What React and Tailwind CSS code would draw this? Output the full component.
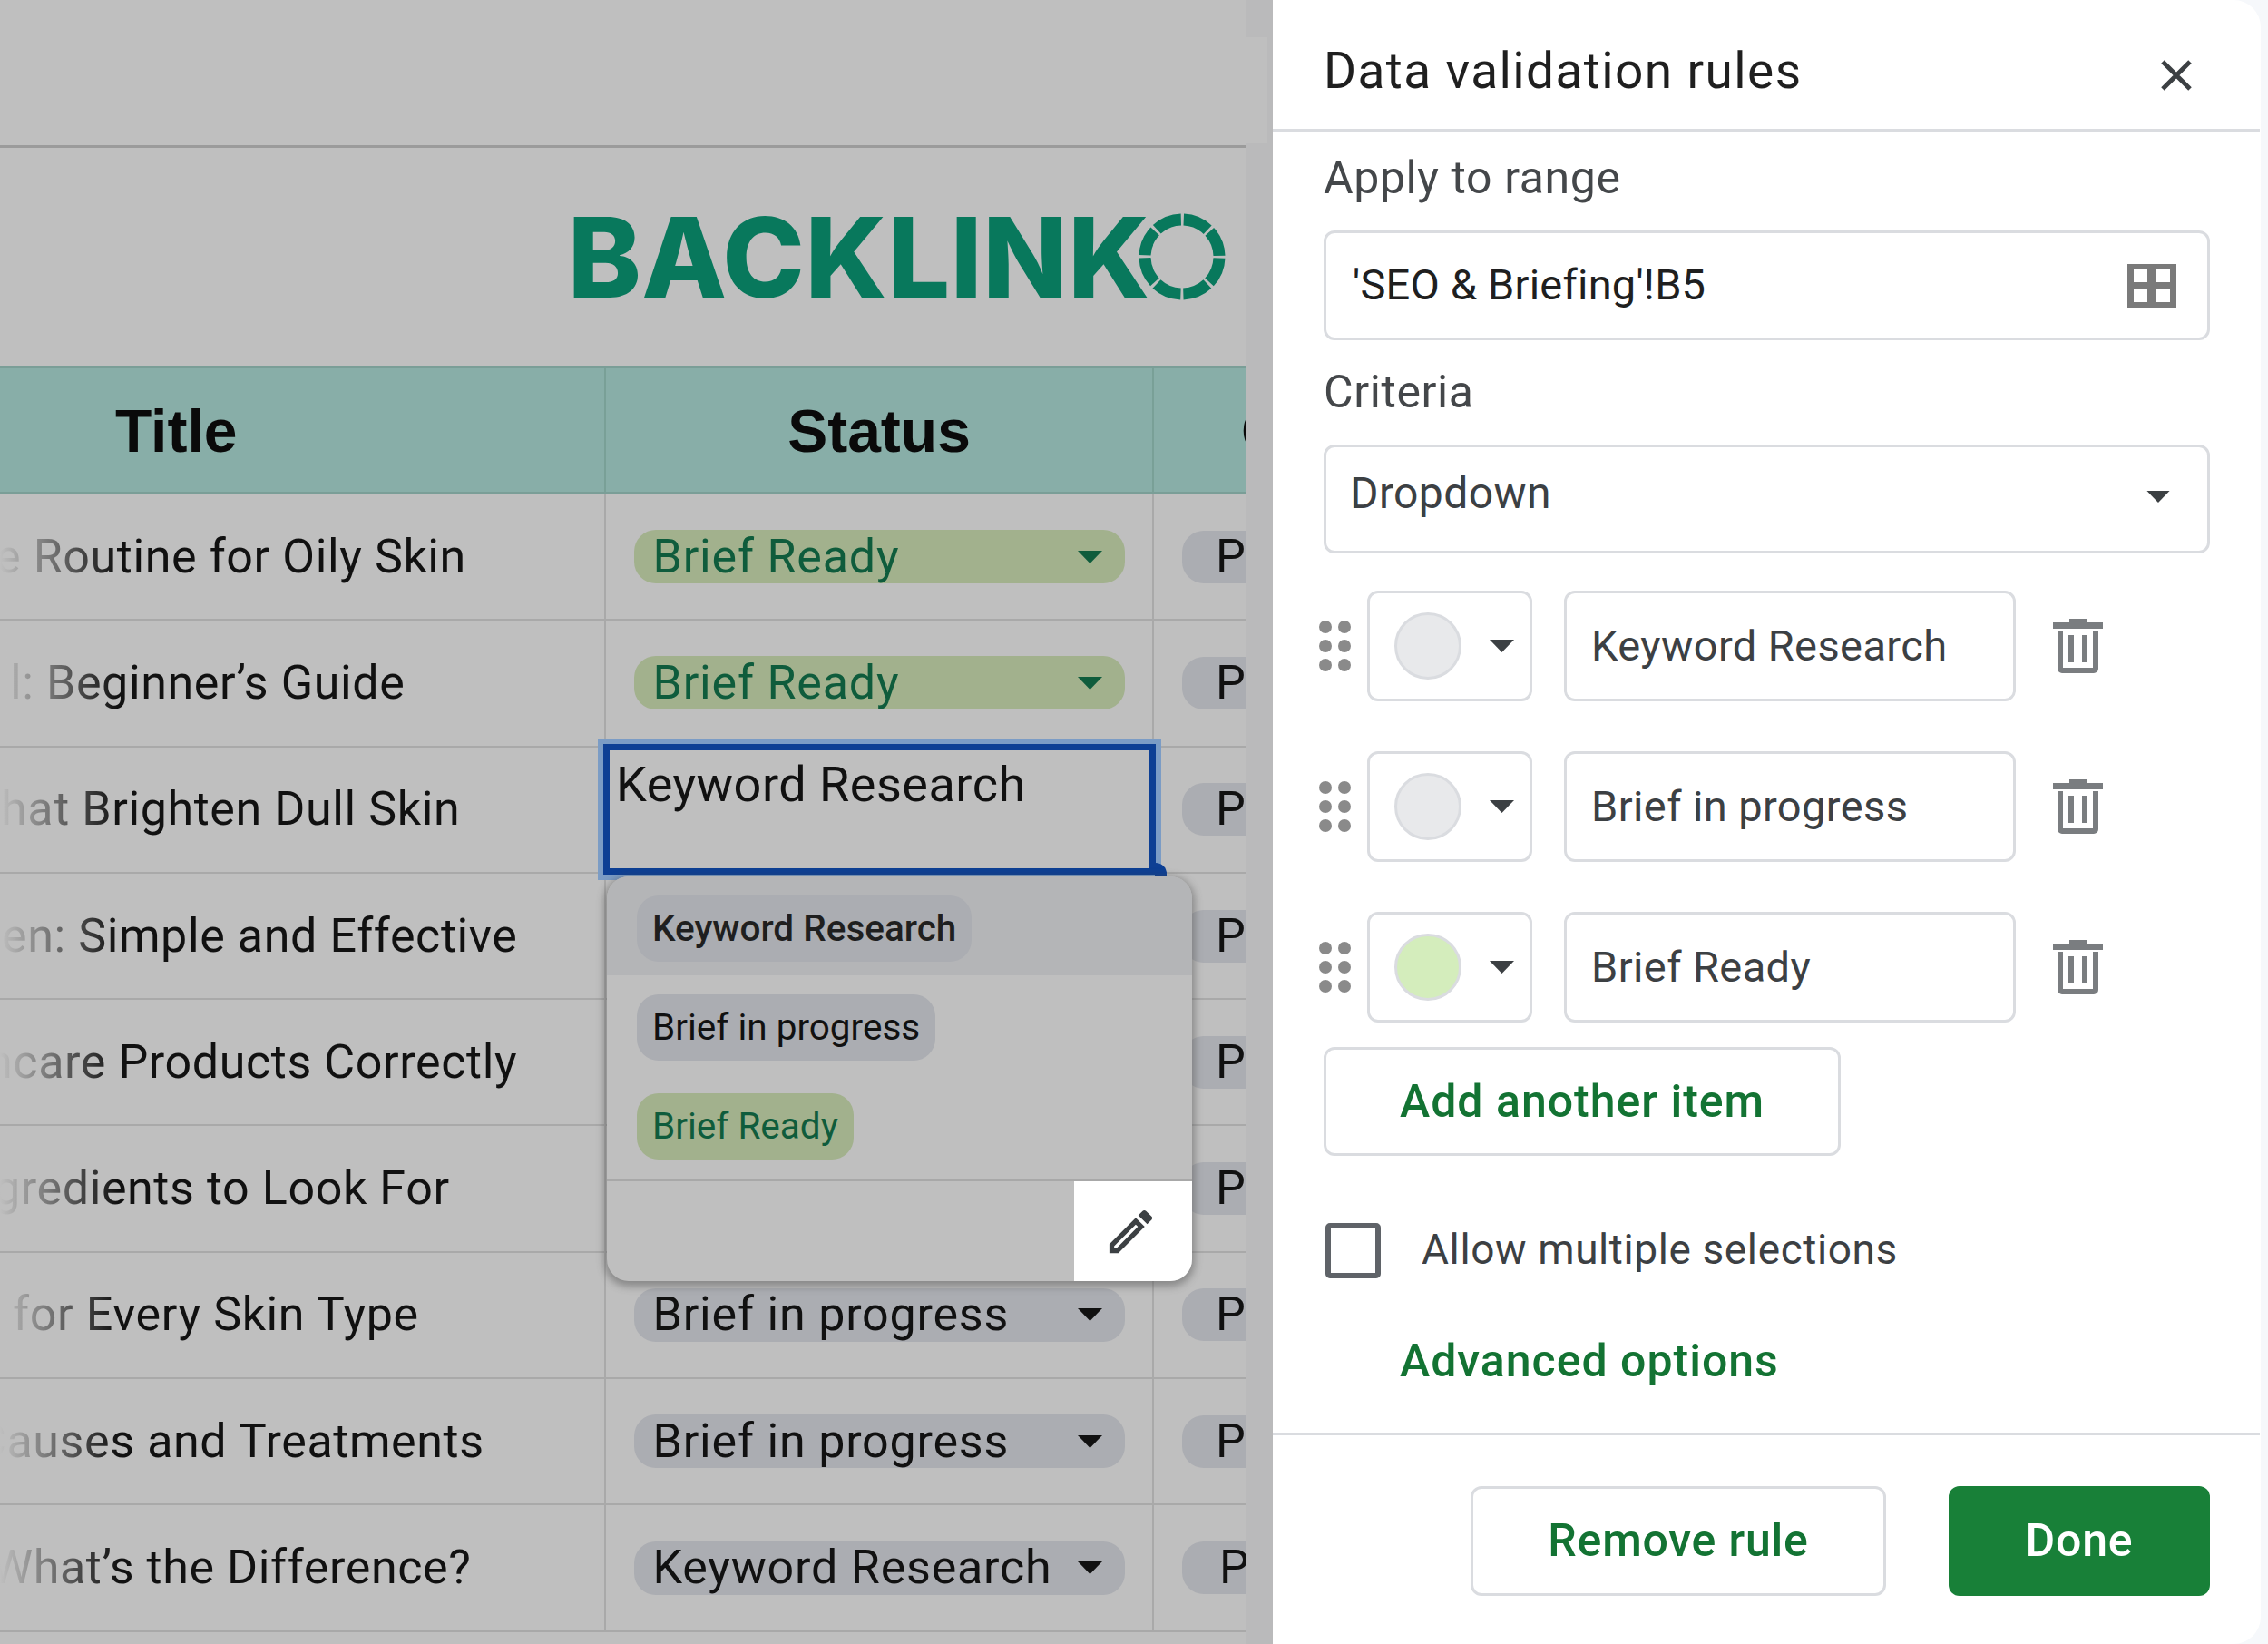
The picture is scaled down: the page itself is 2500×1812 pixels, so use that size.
import React from 'react'

const rows = [
  { title: 'e Routine for Oily Skin', offset: 'ml-[-5px]', status: 'Brief Ready', tone: 'green' },
  { title: 'l: Beginner’s Guide', offset: 'ml-[11px]', status: 'Brief Ready', tone: 'green' },
  { title: 'hat Brighten Dull Skin', offset: 'ml-[1px]', status: '', tone: '' },
  { title: 'en: Simple and Effective', offset: 'ml-[2px]', status: '', tone: '' },
  { title: 'ncare Products Correctly', offset: 'ml-[-15px]', status: '', tone: '' },
  { title: 'gredients to Look For', offset: 'ml-[-7px]', status: '', tone: '' },
  { title: 'for Every Skin Type', offset: 'ml-[14px]', status: 'Brief in progress', tone: 'gray' },
  { title: 'Causes and Treatments', offset: 'ml-[-27px]', status: 'Brief in progress', tone: 'gray' },
  { title: 'What’s the Difference?', offset: 'ml-[-10px]', status: 'Keyword Research', tone: 'gray', pShift: 'ml-[4px]' },
]

const Caret = ({ className }) => (
  <svg viewBox="0 0 27 14" className={className} fill="currentColor">
    <path d="M0 0h27L13.5 14z" />
  </svg>
)

const StatusPill = ({ label, tone }) => (
  <div
    className={`flex h-[59px] w-[541px] items-center justify-between rounded-[24px] pl-[21px] pr-[23px] text-[52px] tracking-[0.8px] ${
      tone === 'green' ? 'bg-[#a2b18d] text-[#0f5c3c]' : 'bg-[#abadb2] text-[#111111]'
    }`}
  >
    <span>{label}</span>
    <Caret className={`h-[14px] w-[31px] ${tone === 'green' ? 'text-[#0f5c3c]' : 'text-[#111111]'}`} />
  </div>
)

const Logo = () => (
  <div className="flex items-center">
    <span className="mt-[2px] font-[Inter] text-[122px] font-extrabold leading-none tracking-[0.6px] text-[#08785c]">BACKLINK</span>
    <svg viewBox="0 0 96 96" className="ml-[-13px] h-[96px] w-[96px]" fill="none" stroke="#08785c" strokeWidth="13">
      <circle cx="48" cy="48" r="41" strokeDasharray="29.2 3" strokeDashoffset="-1.5" />
    </svg>
  </div>
)

const DropdownPopup = () => (
  <div className="absolute left-[669px] top-[966px] z-20 flex h-[446px] w-[645px] flex-col overflow-hidden rounded-[24px] bg-[#bfbfbf] shadow-[0_3px_8px_3px_rgba(70,70,70,0.45)]">
    <div className="flex h-[109px] items-start bg-[#b4b5b7] pl-[33px] pt-[21px]">
      <span className="flex h-[73px] items-center rounded-[24px] bg-[#abadb2] px-[17px] text-[40.5px] font-medium text-[#1f1f1f]">Keyword Research</span>
    </div>
    <div className="h-[224px] pl-[33px] pt-[21px]">
      <span className="flex h-[73px] w-fit items-center rounded-[24px] bg-[#abadb2] px-[17px] text-[40.5px] text-[#111111]">Brief in progress</span>
      <span className="mt-[36px] flex h-[73px] w-fit items-center rounded-[24px] bg-[#a2b18d] px-[17px] text-[40.5px] text-[#0f5c3c]">Brief Ready</span>
    </div>
    <div className="flex flex-1 justify-end border-t-[3px] border-[#a8a8a8]">
      <div className="flex w-[130px] items-center justify-center bg-white pr-[6px]">
        <svg viewBox="0 0 24 24" className="h-[63px] w-[63px]" fill="#3c4043">
          <path d="M14.06 9.02l.92.92L5.92 19H5v-.92l9.06-9.06M17.66 3c-.25 0-.51.1-.7.29l-1.83 1.83 3.75 3.75 1.83-1.83c.39-.39.39-1.02 0-1.41l-2.34-2.34c-.2-.2-.45-.29-.71-.29zm-3.6 3.19L3 17.25V21h3.75L17.81 9.94l-3.75-3.75z" />
        </svg>
      </div>
    </div>
  </div>
)

const Sheet = () => (
  <div className="relative h-[1812px] w-[1403px] shrink-0 bg-[#bababb]">
    <div className="h-[1812px] w-[1373px] overflow-hidden bg-[#bfbfbf]">
      <div className="h-[160px]" />
      <div className="h-[3px] bg-[#9b9b9b]" />
      <div className="flex h-[240px] items-center justify-end pr-[22px]">
        <Logo />
      </div>

      {/* Header row */}
      <div className="grid h-[142px] grid-cols-[668px_604px_1fr] border-y-[3px] border-[#7a9e97] bg-[#88aea8] font-['Liberation_Sans'] text-[66px] font-bold text-[#0a0a0a]">
        <div className="flex items-center border-r-[2px] border-[#79a097] pl-[127px] pt-[2px]">Title</div>
        <div className="flex items-center justify-center border-r-[2px] border-[#79a097] pt-[2px]">Status</div>
        <div className="flex items-center pl-[96px] pt-[2px]">C</div>
      </div>

      {rows.map((row) => (
        <div key={row.title} className="grid h-[139.3px] grid-cols-[668px_604px_1fr] border-b-[2px] border-[#a9a9a9]">
          <div className="relative flex items-center overflow-hidden border-r-[2px] border-[#a9a9a9] text-[52px] tracking-[0.6px] text-[#111111]">
            <span className={`whitespace-nowrap ${row.offset}`}>{row.title}</span>
            <div className="absolute inset-y-0 left-0 w-[130px] bg-linear-to-r from-[#bfbfbf] to-transparent" />
          </div>
          <div className="flex items-center justify-center border-r-[2px] border-[#a9a9a9]">
            {row.status && <StatusPill label={row.status} tone={row.tone} />}
          </div>
          <div className="flex items-center pl-[31px]">
            <div className="flex h-[58px] w-[120px] items-center rounded-l-[24px] bg-[#abadb2] pl-[37px] text-[52px] text-[#111111]">
              <span className={row.pShift}>P</span>
            </div>
          </div>
        </div>
      ))}
    </div>

    {/* Lighter patch of the top bar in the gutter */}
    <div className="absolute left-[1373px] top-[41px] h-[117px] w-[24px] bg-[#bfbfbf]" />

    {/* Selected cell */}
    <div className="absolute left-[659px] top-[814px] z-10 h-[156px] w-[621px] border-[6px] border-[#7b9cc5]">
      <div className="h-full border-[7px] border-[#0d3f94] pl-[7px] pt-[8px] text-[54px] leading-[60px] tracking-[0.5px] text-[#111111]">
        Keyword Research
      </div>
    </div>
    <div className="absolute left-[1273px] top-[951px] z-10 h-[16px] w-[13px] rounded-tr-[12px] bg-[#0d3f94]" />
    <DropdownPopup />
  </div>
)

const Field = ({ className, children }) => (
  <div className={`flex items-center rounded-[12px] border-[3px] border-[#dadce0] ${className}`}>{children}</div>
)

const Label = ({ className, children }) => (
  <div className={`h-[60px] text-[50px] leading-[60px] tracking-[0.6px] text-[#44474a] ${className}`}>{children}</div>
)

const ItemRow = ({ label, swatch }) => (
  <div className="ml-[-5px] flex h-[122px] items-center">
    <div className="mr-[18px] grid w-[35px] grid-cols-2 gap-x-[7px] gap-y-[7px]">
      {[0, 1, 2, 3, 4, 5].map((i) => (
        <span key={i} className="h-[14px] w-[14px] rounded-full bg-[#8a8a8a]" />
      ))}
    </div>
    <Field className="h-[122px] w-[182px] pl-[27px]">
      <span className={`h-[74px] w-[74px] rounded-full border-[3px] border-[#dadce0] ${swatch}`} />
      <Caret className="ml-[31px] h-[14px] w-[27px] text-[#3c4043]" />
    </Field>
    <Field className="ml-[35px] h-[122px] w-[498px] pl-[27px] text-[47px] tracking-[0.4px] text-[#3c4043]">{label}</Field>
    <svg viewBox="0 0 55 60" className="ml-[41px] h-[60px] w-[55px]" fill="#7a7d80">
      <path d="M18 0h19v4h18v7H0V4h18z" />
      <path d="M5 13h45v42a5 5 0 0 1-5 5H10a5 5 0 0 1-5-5zm6 0v41h33V13z" fillRule="evenodd" />
      <path d="M17 18h6v30h-6zM32 18h6v30h-6z" />
    </svg>
  </div>
)

const Panel = () => (
  <div className="h-[1812px] flex-1 bg-[#f6f8fb]">
    <div className="flex h-[1812px] w-[1089px] flex-col rounded-r-[30px] bg-white">
      <div className="flex h-[142px] w-[1088px] shrink-0 items-center justify-between pl-[56px] pr-[75px]">
        <span className="mt-[15px] text-[55px] leading-none tracking-[1.4px] text-[#1f1f1f]">Data validation rules</span>
        <svg viewBox="0 0 34 34" className="mt-[24px] h-[34px] w-[34px]" stroke="#3c4043" strokeWidth="5" fill="none">
          <path d="M2 2l30 30M32 2L2 32" />
        </svg>
      </div>
      <div className="h-[3px] w-[1088px] shrink-0 bg-[#dadce0]" />

      <div className="flex w-[1033px] flex-col pl-[56px]">
        <Label className="mt-[21px]">Apply to range</Label>
        <Field className="mt-[28px] h-[121px] w-[977px] justify-between pl-[29px] pr-[34px] text-[47px] tracking-[0.2px] text-[#1f1f1f]">
          <span>'SEO &amp; Briefing'!B5</span>
          <svg viewBox="0 0 54 48" className="h-[48px] w-[54px]" fill="#7a7a7a">
            <path fillRule="evenodd" d="M0 0h54v48H0zM7 6v14h15V6zm25 0v14h15V6zM7 28v14h15V28zm25 0v14h15V28z" />
          </svg>
        </Field>
        <Label className="mt-[27px]">Criteria</Label>
        <Field className="mt-[28px] h-[120px] w-[977px] justify-between pb-[12px] pl-[26px] pr-[41px] text-[48px] tracking-[0.4px] text-[#3c4043]">
          <span>Dropdown</span>
          <Caret className="mt-[6px] h-[13px] w-[26px] text-[#3c4043]" />
        </Field>

        <div className="mt-[41px] flex flex-col gap-[55px]">
          <ItemRow label="Keyword Research" swatch="bg-[#e8e9eb]" />
          <ItemRow label="Brief in progress" swatch="bg-[#e8e9eb]" />
          <ItemRow label="Brief Ready" swatch="bg-[#d4edbc]" />
        </div>

        <Field className="mt-[27px] h-[120px] w-[570px] pl-[81px] text-[50px] font-medium tracking-[1px] text-[#137333]">Add another item</Field>

        <div className="mt-[74px] flex h-[60px] items-center">
          <div className="ml-[2px] h-[61px] w-[61px] rounded-[5px] border-[6px] border-[#5f6368]" />
          <span className="ml-[45px] mt-[-2px] text-[46px] tracking-[0.6px] text-[#3c4043]">Allow multiple selections</span>
        </div>

        <div className="mt-[62px] h-[60px] pl-[84px] text-[50px] font-medium leading-[60px] tracking-[1px] text-[#137333]">Advanced options</div>
      </div>

      <div className="mt-[49px] h-[3px] w-[1088px] shrink-0 bg-[#dadce0]" />

      <div className="mt-[56px] flex w-[1033px] justify-end gap-[69px]">
        <Field className="h-[121px] w-[458px] justify-center text-[50px] font-medium tracking-[0.8px] text-[#137333]">Remove rule</Field>
        <div className="flex h-[121px] w-[288px] items-center justify-center rounded-[12px] bg-[#188038] text-[50px] font-medium tracking-[0.8px] text-white">Done</div>
      </div>
    </div>
  </div>
)

const App = () => (
  <div className="flex h-[1812px] w-[2500px] overflow-hidden bg-white font-[Roboto,sans-serif]">
    <Sheet />
    <Panel />
  </div>
)

export default App
